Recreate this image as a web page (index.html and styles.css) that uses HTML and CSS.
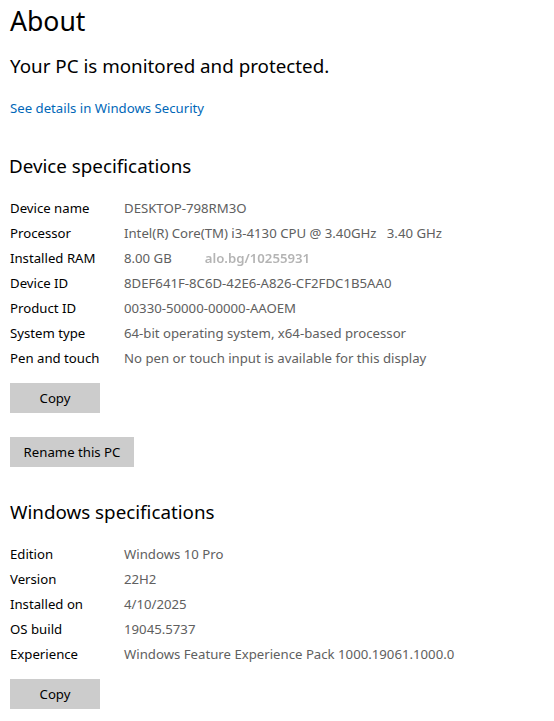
FILE: index.html
```html
<!DOCTYPE html>
<html lang="en">
<head>
<meta charset="utf-8">
<title>About</title>
<link rel="stylesheet" href="styles.css">
</head>
<body>
<main class="page">
  <h1 class="title">About</h1>
  <p class="status">Your PC is monitored and protected.</p>
  <a class="link" href="#">See details in Windows Security</a>

  <h2 class="section first">Device specifications</h2>
  <div class="specs">
    <div class="row"><span class="label">Device name</span><span class="value">DESKTOP-798RM3O</span></div>
    <div class="row"><span class="label">Processor</span><span class="value">Intel(R) Core(TM) i3-4130 CPU @ 3.40GHz&nbsp;&nbsp; 3.40 GHz</span></div>
    <div class="row"><span class="label">Installed RAM</span><span class="value">8.00 GB<span class="mark">alo.bg/10255931</span></span></div>
    <div class="row"><span class="label">Device ID</span><span class="value">8DEF641F-8C6D-42E6-A826-CF2FDC1B5AA0</span></div>
    <div class="row"><span class="label">Product ID</span><span class="value">00330-50000-00000-AAOEM</span></div>
    <div class="row"><span class="label">System type</span><span class="value">64-bit operating system, x64-based processor</span></div>
    <div class="row"><span class="label">Pen and touch</span><span class="value">No pen or touch input is available for this display</span></div>
  </div>
  <button class="btn copy" type="button">Copy</button>
  <button class="btn rename" type="button">Rename this PC</button>

  <h2 class="section second">Windows specifications</h2>
  <div class="specs">
    <div class="row"><span class="label">Edition</span><span class="value">Windows 10 Pro</span></div>
    <div class="row"><span class="label">Version</span><span class="value">22H2</span></div>
    <div class="row"><span class="label">Installed on</span><span class="value">4/10/2025</span></div>
    <div class="row"><span class="label">OS build</span><span class="value">19045.5737</span></div>
    <div class="row"><span class="label">Experience</span><span class="value">Windows Feature Experience Pack 1000.19061.1000.0</span></div>
  </div>
  <button class="btn copy" type="button">Copy</button>
</main>
</body>
</html>
```

FILE: styles.css
```css
html, body {
  margin: 0;
  padding: 0;
  background: #ffffff;
}

body {
  font-family: "Noto Sans", "Open Sans", "Liberation Sans", sans-serif;
  color: #000000;
}

.page {
  display: flex;
  flex-direction: column;
  align-items: flex-start;
  padding: 3px 0 0 10px;
}

.title {
  margin: 0;
  font-size: 26.6px;
  line-height: 36px;
  font-weight: 400;
}

.status {
  margin: 13px 0 0;
  font-size: 18.8px;
  line-height: 28px;
}

.link {
  margin-top: 18px;
  font-size: 13.2px;
  line-height: 20px;
  color: #0067b8;
  text-decoration: none;
}

.section {
  margin: 0 0 0 -1px;
  font-size: 18.8px;
  line-height: 28px;
  font-weight: 400;
}

.section.first { margin-top: 34px; }
.section.second { margin-top: 31px; margin-left: 0; }

.specs {
  display: flex;
  flex-direction: column;
  margin-top: 16px;
}

.row {
  display: grid;
  grid-template-columns: 114px auto;
  height: 25px;
  line-height: 25px;
  font-size: 13.2px;
  white-space: nowrap;
}

.label { color: #000000; }
.value { color: #606060; }

.mark {
  margin-left: 33px;
  color: #b4b4b4;
  font-weight: 600;
  filter: blur(0.7px);
}

.btn {
  font-family: inherit;
  font-size: 13.2px;
  color: #000000;
  background: #cccccc;
  border: 0;
  height: 30px;
  padding: 0;
  margin-top: 12px;
}

.btn.copy { width: 90px; }
.btn.rename { width: 124px; margin-top: 24px; }
```
